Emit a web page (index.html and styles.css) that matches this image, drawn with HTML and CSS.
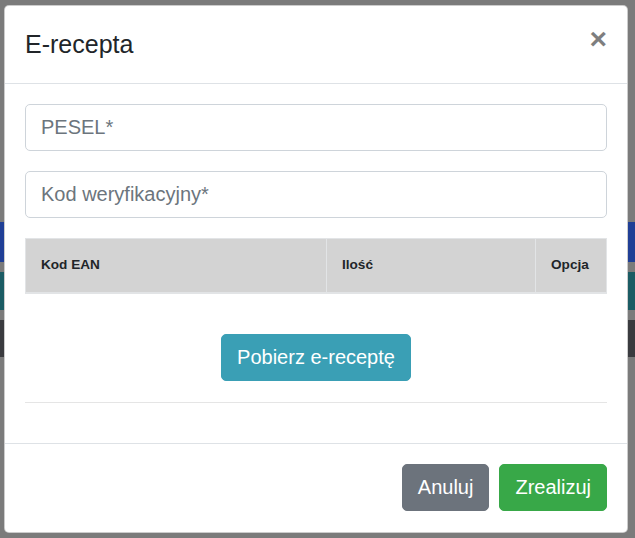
FILE: index.html
```html
<!DOCTYPE html>
<html lang="pl">
<head>
<meta charset="utf-8">
<title>E-recepta</title>
<link rel="stylesheet" href="styles.css">
</head>
<body>
<div class="page-behind">
  <div class="bar bar-blue"></div>
  <div class="bar bar-teal"></div>
  <div class="bar bar-dark"></div>
</div>
<div class="modal-layer">
  <div class="modal">
    <div class="modal-header">
      <h5 class="modal-title">E-recepta</h5>
      <button class="close" type="button" aria-label="Close">×</button>
    </div>
    <div class="modal-body">
      <input class="form-control" type="text" placeholder="PESEL*">
      <input class="form-control" type="text" placeholder="Kod weryfikacyjny*">
      <table class="table">
        <thead>
          <tr>
            <th class="col-ean">Kod EAN</th>
            <th class="col-qty">Ilość</th>
            <th class="col-opt">Opcja</th>
          </tr>
        </thead>
      </table>
      <div class="center">
        <button class="btn btn-info" type="button">Pobierz e-receptę</button>
      </div>
      <hr class="divider">
    </div>
    <div class="modal-footer">
      <button class="btn btn-secondary" type="button">Anuluj</button>
      <button class="btn btn-success" type="button">Zrealizuj</button>
    </div>
  </div>
</div>
</body>
</html>
```
FILE: styles.css
```css
html, body {
  margin: 0;
  padding: 0;
  width: 635px;
  height: 538px;
  overflow: hidden;
}
body {
  background: #7b7b7b;
  font-family: "Liberation Sans", Arial, sans-serif;
  font-size: 20px;
  color: #212529;
  position: relative;
}
.page-behind {
  position: absolute;
  inset: 0;
  padding-top: 222px;
  display: flex;
  flex-direction: column;
  gap: 10px;
}
.bar {
  height: 40px;
}
.bar-blue { background: #203f96; }
.bar-teal { background: #1b5c64; height: 38px; }
.bar-dark { background: #3a3b3f; height: 37px; }

.modal-layer {
  position: absolute;
  inset: 0;
  padding: 5px 7px 0 4px;
}
.modal {
  background: #fff;
  border: 1px solid rgba(0,0,0,0.2);
  border-radius: 5px;
  display: flex;
  flex-direction: column;
}
.modal-header {
  display: flex;
  align-items: flex-start;
  justify-content: space-between;
  padding: 20px 20px 19px 20px;
  border-bottom: 1px solid #dee2e6;
}
.modal-title {
  margin: 0;
  font-size: 25px;
  font-weight: 500;
  line-height: 37.5px;
}
.close {
  background: transparent;
  border: 0;
  padding: 20px;
  margin: -22px -20px -20px auto;
  font-family: "Liberation Sans", Arial, sans-serif;
  font-size: 30px;
  font-weight: 700;
  line-height: 1;
  color: #000;
  opacity: 0.5;
  cursor: pointer;
}
.modal-body {
  padding: 20px;
  display: flex;
  flex-direction: column;
}
.form-control {
  display: block;
  box-sizing: border-box;
  width: 100%;
  height: 47px;
  margin: 0 0 20px 0;
  padding: 7.5px 15px;
  font-family: "Liberation Sans", Arial, sans-serif;
  font-size: 20px;
  line-height: 30px;
  color: #495057;
  background: #fff;
  border: 1px solid #ced4da;
  border-radius: 5px;
}
.form-control::placeholder {
  color: #6c757d;
  opacity: 1;
}
.table {
  width: 100%;
  border-collapse: collapse;
  margin-bottom: 20px;
}
.table th {
  background: #d3d3d3;
  border: 1px solid #e2e4e6;
  border-bottom: 2px solid #e2e4e6;
  padding: 16px 15px 17px 15px;
  font-size: 13.6px;
  font-weight: 700;
  line-height: 20px;
  text-align: left;
  color: #212529;
}
.col-ean { width: 270px; }
.col-qty { width: 178px; }
.col-opt { width: 40px; }
.center {
  display: flex;
  justify-content: center;
  padding-top: 20px;
}
.btn {
  display: inline-block;
  font-family: "Liberation Sans", Arial, sans-serif;
  font-size: 20px;
  line-height: 30px;
  padding: 7.5px 15px;
  border: 1px solid transparent;
  border-radius: 5px;
  color: #fff;
  cursor: pointer;
}
.btn-info { background: #3a9fb5; border-color: #3a9fb5; }
.btn-secondary { background: #6c737c; border-color: #6c737c; }
.btn-success { background: #38a848; border-color: #38a848; }
.divider {
  margin: 21px 0 20px 0;
  border: 0;
  border-top: 1px solid rgba(0,0,0,0.1);
}
.modal-footer {
  display: flex;
  justify-content: flex-end;
  align-items: center;
  padding: 15px 15px 16px 15px;
  border-top: 1px solid #dee2e6;
}
.modal-footer .btn {
  margin: 5px;
}
```
